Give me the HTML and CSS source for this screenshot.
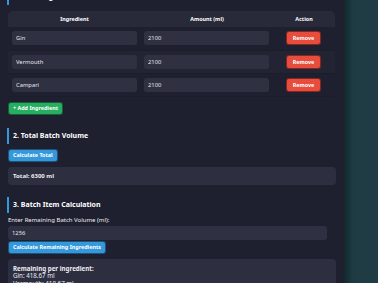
FILE: index.html
```html
<!DOCTYPE html>
<html lang="en">
<head>
    <meta charset="UTF-8">
    <meta name="viewport" content="width=device-width, initial-scale=1.0">
    <title>Batch Calculator</title>
    <link rel="stylesheet" href="styles.css">
</head>
<body>

<div class="card">
    <h2>1. Enter Ingredients</h2>
    <table class="tablaIngredientes">
        <colgroup>
            <col class="colNombre">
            <col class="colCantidad">
            <col class="colAccion">
        </colgroup>
        <thead>
            <tr>
                <th>Ingredient</th>
                <th>Amount (ml)</th>
                <th>Action</th>
            </tr>
        </thead>
        <tbody>
            <tr>
                <td><input type="text" value="Gin"></td>
                <td><input type="text" value="2100"></td>
                <td><button class="btn btnRemove">Remove</button></td>
            </tr>
            <tr>
                <td><input type="text" value="Vermouth"></td>
                <td><input type="text" value="2100"></td>
                <td><button class="btn btnRemove">Remove</button></td>
            </tr>
            <tr>
                <td><input type="text" value="Campari"></td>
                <td><input type="text" value="2100"></td>
                <td><button class="btn btnRemove">Remove</button></td>
            </tr>
        </tbody>
    </table>
    <button class="btn btnAdd">+ Add Ingredient</button>

    <h2 class="sec2">2. Total Batch Volume</h2>
    <button class="btn btnCalc">Calculate Total</button>
    <div class="resultado">Total: 6300 ml</div>

    <h2 class="sec3">3. Batch Item Calculation</h2>
    <label class="etiqueta" for="restante">Enter Remaining Batch Volume (ml):</label>
    <input class="inputRestante" id="restante" type="text" value="1256">
    <button class="btn btnCalc">Calculate Remaining Ingredients</button>
    <div class="resultado resultadoLista">
        <strong>Remaining per ingredient:</strong><br>
        Gin: 418.67 ml<br>
        Vermouth: 418.67 ml<br>
        Campari: 418.67 ml
    </div>
</div>

</body>
</html>
```

FILE: styles.css
```css
*{margin: 0; padding: 0; box-sizing: border-box;}

body{
    background: #1f3c45;
    font-family: "Noto Sans", "Liberation Sans", sans-serif;
    color: #ededf2;
    overflow: hidden;
}
.card{
    width: 344px;
    margin-top: -11px;
    padding: 0 8px 30px;
    background: #1e2030;
    box-shadow: 3px 0 8px rgba(0,0,0,0.45);
}
h2{
    margin-left: -1px;
    border-left: 2px solid #3498db;
    padding-left: 4px;
    font-size: 7px;
    line-height: 16px;
    color: #fff;
}
.sec2{ margin-top: 13px; }
.sec3{ margin-top: 12px; }

.tablaIngredientes{
    width: 327px;
    margin-top: 6px;
    border-collapse: collapse;
    table-layout: fixed;
}
.colNombre{ width: 133px; }
.colCantidad{ width: 132px; }
.colAccion{ width: 62px; }
.tablaIngredientes th{
    height: 16px;
    background: #282a3a;
    font-size: 5.4px;
    font-weight: bold;
    color: #fff;
}
.tablaIngredientes th:first-child{ border-top-left-radius: 5px; }
.tablaIngredientes th:last-child{ border-top-right-radius: 5px; }
.tablaIngredientes td{
    height: 23px;
    padding: 0 4px 0 3px;
    text-align: center;
    border-bottom: 1px solid #1b1d2b;
}
.tablaIngredientes tbody tr:nth-child(even){ background: #222434; }
.tablaIngredientes td:first-child{ padding-left: 4px; }

input{
    display: block;
    width: 100%;
    height: 14px;
    padding: 0 4px;
    border: none;
    border-radius: 3px;
    background: #2f3142;
    color: #e6e6ec;
    font-family: inherit;
    font-size: 5.8px;
}

.btn{
    display: block;
    height: 13px;
    padding: 0 4px;
    border: 1px solid rgba(0,0,0,0.45);
    border-radius: 3px;
    color: #fff;
    font-family: inherit;
    font-size: 5.4px;
    font-weight: bold;
}
.btnRemove{
    width: 35px;
    height: 14px;
    margin: 0 0 0 10px;
    padding: 0;
    background: #e74c3c;
}
.btnAdd{
    margin-top: 5px;
    background: #27ae60;
}
.btnCalc{
    margin-top: 5px;
    background: #3498db;
}

.resultado{
    margin-top: 5px;
    padding: 5px 5px;
    border-radius: 4px;
    background: #2d2f40;
    font-size: 6px;
    line-height: 8px;
    font-weight: bold;
}
.resultadoLista{
    padding-top: 6px;
    font-weight: normal;
    font-size: 6.2px;
    line-height: 7.5px;
}

.etiqueta{
    display: block;
    margin-top: 3px;
    font-size: 6px;
    line-height: 9px;
}
.inputRestante{
    width: 319px;
    margin-top: 1px;
}
.inputRestante + .btnCalc{ margin-top: 1px; }
```
